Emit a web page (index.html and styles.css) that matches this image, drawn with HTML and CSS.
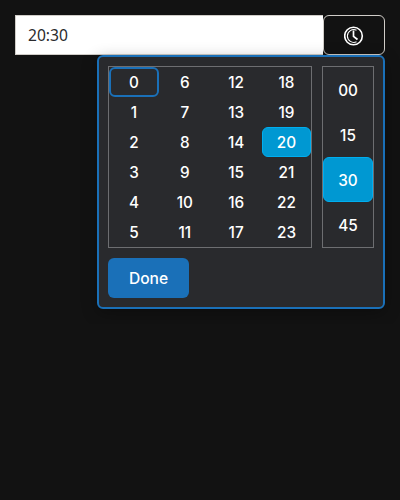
FILE: index.html
```
<!DOCTYPE html>
<html lang="en">
<head>
<meta charset="utf-8">
<title>Time picker</title>
<link rel="stylesheet" href="styles.css">
</head>
<body>
<div class="timepicker">
  <div class="field">
    <div class="value">20:30</div>
    <button class="toggle" aria-label="Choose time">
      <svg width="20" height="20" viewBox="0 0 20 20" fill="none" stroke="#fff">
        <circle cx="9.5" cy="10" r="8.8" stroke-width="1.6"/>
        <path d="M12.5 4.2A6.4 6.4 0 1 0 12.5 15.8" stroke-width="1.1"/>
        <path d="M9.5 4.5V10.3L13.5 13.5" stroke-width="1.7"/>
      </svg>
    </button>
  </div>
  <div class="popup">
    <div class="lists">
      <div class="hours">
        <span class="focused">0</span><span>1</span><span>2</span><span>3</span><span>4</span><span>5</span>
        <span>6</span><span>7</span><span>8</span><span>9</span><span>10</span><span>11</span>
        <span>12</span><span>13</span><span>14</span><span>15</span><span>16</span><span>17</span>
        <span>18</span><span>19</span><span class="selected">20</span><span>21</span><span>22</span><span>23</span>
      </div>
      <div class="minutes">
        <span>00</span><span>15</span><span class="selected">30</span><span>45</span>
      </div>
    </div>
    <button class="done">Done</button>
  </div>
</div>
</body>
</html>
```
FILE: styles.css
```
* { box-sizing: border-box; }
body {
  margin: 0;
  padding: 15px;
  background: #121212;
  color: #fff;
  font: 500 15.3px/1 Inter, sans-serif;
}
button { font: inherit; color: inherit; padding: 0; }
.timepicker { display: flex; flex-direction: column; }
.field { display: flex; height: 40px; }
.value {
  flex: 1;
  display: flex;
  align-items: center;
  padding: 2px 13px 0 12px;
  border: 1px solid #d0cdc8;
  border-right: 0;
  background: #fff;
  color: #292a2d;
  font: 400 15.6px/1 "Noto Sans", sans-serif;
}
.toggle {
  width: 62px;
  display: flex;
  align-items: center;
  justify-content: center;
  padding-top: 2px;
  border: 1px solid #d0cdc8;
  border-radius: 6px;
  background: #121212;
}
.popup {
  align-self: flex-end;
  width: 288px;
  height: 254px;
  padding: 9px;
  border: 2px solid #1a70b8;
  border-radius: 6px;
  background: #292a2d;
  box-shadow: 0 4px 16px rgba(0, 0, 0, .3);
}
.lists { display: flex; gap: 10px; }
.hours, .minutes { display: grid; height: 182px; border: 1px solid #6d6e71; }
.hours {
  width: 204px;
  grid-auto-flow: column;
  grid-template-rows: repeat(6, 30px);
  grid-template-columns: 50px 51px 51px 49px;
  column-gap: .33px;
}
.minutes { width: 52px; grid-template-rows: repeat(4, 45px); }
.hours span, .minutes span {
  display: flex;
  align-items: center;
  justify-content: center;
  padding-top: 1px;
  border: 1px solid transparent;
  border-radius: 6px;
}
.minutes span { padding-top: 3px; }
.hours .focused { border: 2px solid #1a70b8; }
.hours .selected, .minutes .selected { background: #0098d2; border-color: #00aeef; }
.done {
  display: block;
  width: 81px;
  height: 40px;
  margin-top: 10px;
  padding-top: 2px;
  border: 0;
  border-radius: 6px;
  background: #1a70b8;
  font-size: 15.6px;
}
```
